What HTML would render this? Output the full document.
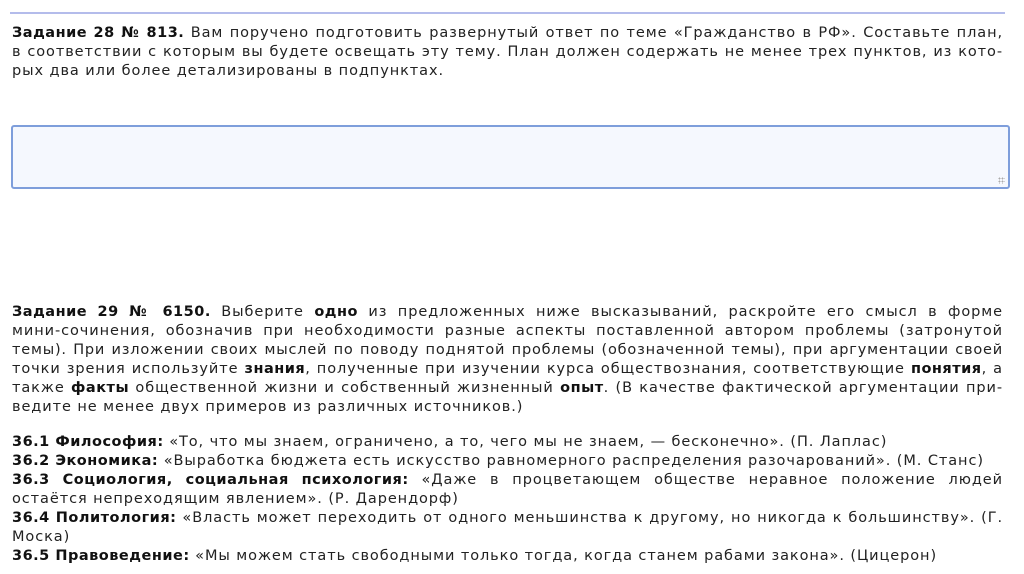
<!DOCTYPE html>
<html><head><meta charset="utf-8"><style>
html,body{margin:0;padding:0;background:#fff;width:1024px;height:574px;overflow:hidden}
body{font-family:"DejaVu Sans","Liberation Sans",sans-serif;font-size:14.5px;letter-spacing:0.92px;color:#222;position:relative}
.rule{position:absolute;left:10px;top:12px;width:995px;height:2px;background:#b4bceb}
.blk{position:absolute;left:12px;width:991px;line-height:19px}
.l{white-space:nowrap;text-align:justify;text-align-last:justify;height:19px}
.n{text-align-last:left}
b{color:#111;letter-spacing:0.5px}
.ta{position:absolute;left:11px;top:125px;width:995px;height:60px;border:2px solid #7e9edb;border-radius:3px;background:#f5f8fe}
.grip{position:absolute;right:3px;bottom:3px;width:7px;height:7px;background:
radial-gradient(circle,#aaa 0.8px,transparent 1px) 0 0/3px 3px}
</style></head><body>
<div class="rule"></div>
<div class="blk" style="top:24px">
<div class="l"><b>Задание 28 № 813.</b> Вам поручено подготовить развернутый ответ по теме «Гражданство в РФ». Составьте план,</div>
<div class="l">в соответствии с которым вы будете освещать эту тему. План должен содержать не менее трех пунктов, из кото-</div>
<div class="l n">рых два или более детализированы в подпунктах.</div>
</div>
<div class="ta"><div class="grip"></div></div>
<div class="blk" style="top:303px">
<div class="l"><b>Задание 29 № 6150.</b> Выберите <b>одно</b> из предложенных ниже высказываний, раскройте его смысл в форме</div>
<div class="l">мини-сочинения, обозначив при необходимости разные аспекты поставленной автором проблемы (затронутой</div>
<div class="l" style="letter-spacing:0.8px">темы). При изложении своих мыслей по поводу поднятой проблемы (обозначенной темы), при аргументации своей</div>
<div class="l">точки зрения используйте <b>знания</b>, полученные при изучении курса обществознания, соответствующие <b>понятия</b>, а</div>
<div class="l">также <b>факты</b> общественной жизни и собственный жизненный <b>опыт</b>. (В качестве фактической аргументации при-</div>
<div class="l n">ведите не менее двух примеров из различных источников.)</div>
</div>
<div class="blk" style="top:433px">
<div class="l n"><b>36.1 Философия:</b> «То, что мы знаем, ограничено, а то, чего мы не знаем, — бесконечно». (П. Лаплас)</div>
<div class="l n"><b>36.2 Экономика:</b> «Выработка бюджета есть искусство равномерного распределения разочарований». (М. Станс)</div>
<div class="l"><b>36.3 Социология, социальная психология:</b> «Даже в процветающем обществе неравное положение людей</div>
<div class="l n">остаётся непреходящим явлением». (Р. Дарендорф)</div>
<div class="l"><b>36.4 Политология:</b> «Власть может переходить от одного меньшинства к другому, но никогда к большинству». (Г.</div>
<div class="l n">Моска)</div>
<div class="l n"><b>36.5 Правоведение:</b> «Мы можем стать свободными только тогда, когда станем рабами закона». (Цицерон)</div>
</div>
</body></html>
